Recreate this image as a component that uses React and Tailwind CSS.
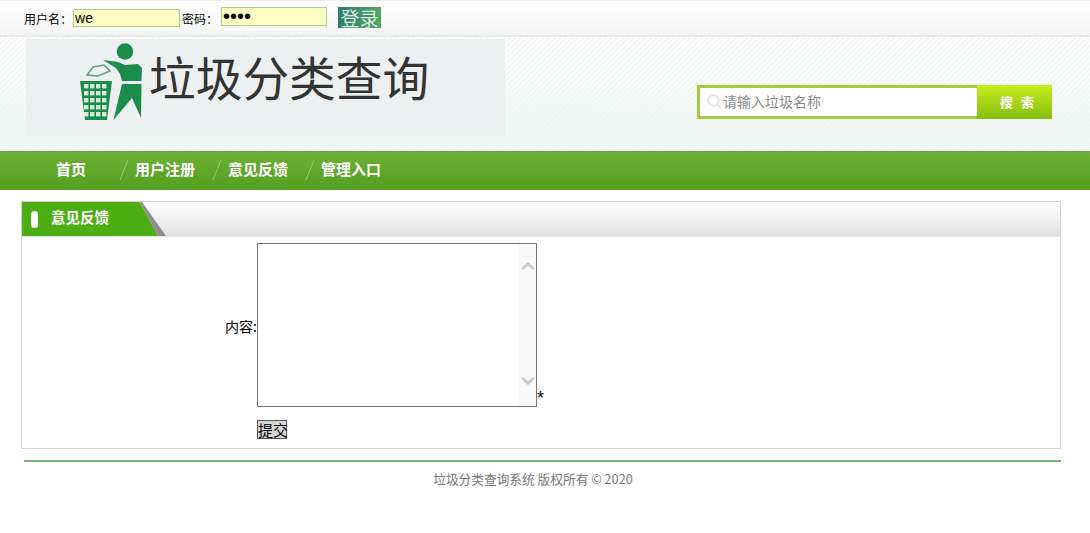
import { ChevronDown, ChevronUp, Search } from "lucide-react";

const cjk = "font-['Noto_Sans_CJK_SC','Liberation_Sans',sans-serif]";

function Logo() {
  return (
    <svg width="80" height="89" viewBox="0 1 80 89" className="shrink-0">
      <circle cx="55" cy="13.5" r="8.3" fill="#1c8c4c" />
      <path d="M33 22 L48 24 L55 27 L68 26 L72 30 L71.5 43 L52 43 L50 36 L46 30 Z" fill="#1c8c4c" />
      <path d="M52 46 L71.5 46 L71 80 L62 60 L43.5 82 Z" fill="#1c8c4c" />
      <path d="M17 37 L23 29 L34 27 L40 33 L28 38 Z" fill="none" stroke="#5fa583" strokeWidth="1.6" />
      <path d="M10 43 H42 L37 82 H15 Z" fill="#1c8c4c" />
      <g fill="#d5ebdd">
        {[46, 53, 60, 67, 74].map((y) =>
          [14, 20, 26, 32].map((x) => <rect key={`${x}-${y}`} x={x} y={y} width="4.4" height="4.4" />),
        )}
      </g>
    </svg>
  );
}

function NavLink({ label, slash, className }) {
  return (
    <div className={`flex items-center ${className}`}>
      {slash && (
        <svg width="10" height="22" viewBox="0 0 10 22" className="mr-[6px]">
          <path d="M9 1 L1 21" stroke="#9cc97a" strokeWidth="1" />
        </svg>
      )}
      <span>{label}</span>
    </div>
  );
}

export default function App() {
  return (
    <div className={`h-[533px] w-[1090px] overflow-hidden bg-white text-black ${cjk}`}>
      <div className="flex h-[37px] items-start border-t border-b-2 border-t-[#eeeeee] border-b-[#e6e6e6] bg-gradient-to-b from-white to-[#f5f5f5] pl-6 text-[12px]">
        <span className="mt-[9px] leading-[17px]">用户名：</span>
        <input
          readOnly
          value="we"
          className="mt-[8px] ml-[1px] h-[18px] w-[107px] border border-[#a9cf8c] bg-[#ffffc4] px-[1px] font-['Liberation_Sans',sans-serif] text-[14px] leading-none"
        />
        <span className="mt-[9px] ml-[2px] w-[39px] leading-[17px]">密码：</span>
        <input
          readOnly
          type="password"
          value="1234"
          className="mt-[6px] h-[19px] w-[106px] border border-[#a9cf8c] bg-[#ffffc4] px-[1px] font-['Liberation_Sans',sans-serif] text-[20px] leading-none"
        />
        <div className="mt-[6px] ml-[11px] flex h-[21px] w-[43px] items-center justify-center bg-gradient-to-r from-[#2f7a70] to-[#55a55f] text-[19px] leading-none text-[#d8efe0]">
          登录
        </div>
      </div>

      <div className="flex h-[114px] items-start bg-[linear-gradient(to_bottom,rgba(255,255,255,0),rgba(236,245,241,0.9)),repeating-linear-gradient(135deg,#f5f8f7_0px,#f5f8f7_2px,#ffffff_2px,#ffffff_4px)] pl-[26px]">
        <div className="mt-[2px] flex h-[97px] w-[479px] items-start bg-[#ecf0f1] pl-[44px]">
          <Logo />
          <span className="mt-[7px] -ml-[1px] text-[46.7px] leading-[60px] text-[#333333]">垃圾分类查询</span>
        </div>
        <div className="mt-[48px] ml-[192px] flex h-[34px] w-[355px]">
          <div className="flex w-[280px] items-center border-[3px] border-r-0 border-[#a2cc39] bg-white pb-[2px] pl-[6px] text-[14px] text-[#8c8c8c]">
            <Search size={16} strokeWidth={3} className="mr-[1px] text-[#e4e4e4]" />
            请输入垃圾名称
          </div>
          <div className="flex flex-1 items-center justify-center gap-[8px] bg-gradient-to-b from-[#c8ec1c] to-[#84bf10] pl-[5px] text-[13px] font-bold text-white">
            <span>搜</span>
            <span>索</span>
          </div>
        </div>
      </div>

      <div className="flex h-[39px] items-center border-t border-b border-t-[#6f9f4d] border-b-[#5b9a24] bg-gradient-to-b from-[#6eb135] to-[#539f1e] pb-[2px] text-[15px] font-bold text-white">
        <NavLink label="首页" className="ml-[56px]" />
        <NavLink label="用户注册" slash className="ml-[33px]" />
        <NavLink label="意见反馈" slash className="ml-[17px]" />
        <NavLink label="管理入口" slash className="ml-[17px]" />
      </div>

      <div className="mt-[11px] ml-[21px] w-[1040px] border border-[#d2d2d2]">
        <div className="flex h-[34px] bg-gradient-to-b from-white to-[#e2e2e2]">
          <div className="flex w-[118px] items-center bg-[#4dae14] pb-[4px] pl-[9px] text-[14.5px] font-bold text-white">
            <span className="mt-[4px] mr-[13px] h-[17px] w-[7px] rounded-full bg-white" />
            意见反馈
          </div>
          <svg width="26" height="34" viewBox="0 0 26 34" className="shrink-0">
            <path d="M0 0 L18 34 H0 Z" fill="#4dae14" />
            <path d="M0 0 H2 L26 34 H18 Z" fill="#8f8f8f" />
          </svg>
        </div>
        <div className="h-[212px] border-t border-[#e4e4e4]">
          <div className="mt-[6px] flex items-start">
            <div className="mt-[73px] w-[235px] text-right text-[14px] leading-[20px]">内容:</div>
            <div className="relative h-[164px] w-[280px] border border-[#767676]">
              <textarea readOnly className="block h-full w-full resize-none overflow-hidden bg-white" />
              <div className="absolute top-0 right-0 bottom-0 flex w-[17px] flex-col items-center justify-between bg-[#f8f8f8] pt-[12px] pb-[15px] text-[#c8c8c8]">
                <ChevronUp size={20} strokeWidth={3} />
                <ChevronDown size={20} strokeWidth={3} />
              </div>
            </div>
            <span className="mt-[145px] font-['Liberation_Sans',sans-serif] text-[18px] leading-[20px]">*</span>
          </div>
          <button className="mt-[12px] ml-[235px] block h-[19px] w-[30px] border border-[#555555] bg-[#d6d6d6] text-[15px] leading-none whitespace-nowrap">
            提交
          </button>
        </div>
      </div>

      <div className="mt-[11px] ml-[24px] h-[2px] w-[1037px] bg-[#72b877]" />
      <div className="mt-[8px] w-[1066px] text-center text-[12.7px] leading-[18px] text-[#777777]">
        垃圾分类查询系统 版权所有 © 2020
      </div>
    </div>
  );
}
